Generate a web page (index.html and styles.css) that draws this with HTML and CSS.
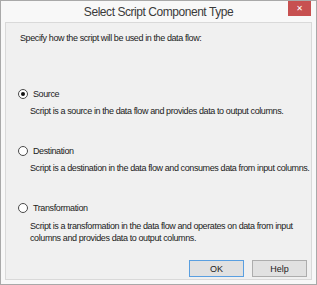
FILE: index.html
```html
<!DOCTYPE html>
<html lang="en">
<head>
  <meta charset="UTF-8" />
  <title>Select Script Component Type</title>
  <link rel="stylesheet" href="styles.css">
</head>
<body>
  <div class="window">
    <div class="titlebar">
      <span></span>
      <span class="title">Select Script Component Type</span>
      <span class="close-btn">&#x2715;</span>
    </div>

    <div class="client">
      <p class="intro">Specify how the script will be used in the data flow:</p>

      <div class="options">
        <div class="option">
          <div class="option-head">
            <span class="radio checked"></span>
            <span>Source</span>
          </div>
          <p class="option-desc">Script is a source in the data flow and provides data to output columns.</p>
        </div>

        <div class="option">
          <div class="option-head">
            <span class="radio"></span>
            <span>Destination</span>
          </div>
          <p class="option-desc">Script is a destination in the data flow and consumes data from input columns.</p>
        </div>

        <div class="option">
          <div class="option-head">
            <span class="radio"></span>
            <span>Transformation</span>
          </div>
          <p class="option-desc">Script is a transformation in the data flow and operates on data from input<br>columns and provides data to output columns.</p>
        </div>
      </div>

      <div class="buttons">
        <button class="btn default">OK</button>
        <button class="btn">Help</button>
      </div>
    </div>
  </div>
</body>
</html>
```

FILE: styles.css
```css
* {
  box-sizing: border-box;
  margin: 0;
  padding: 0;
}

body {
  background-color: #ffffff;
  font-family: "Liberation Sans", Arial, sans-serif;
}

.window {
  width: 317px;
  height: 285px;
  border: 1px solid #a9a9a9;
  background-color: #f8f8f8;
  padding: 0 4px 4px 4px;
  display: flex;
  flex-direction: column;
}

.titlebar {
  height: 21px;
  display: grid;
  grid-template-columns: 1fr auto 1fr;
  align-items: start;
}

.title {
  font-size: 12px;
  letter-spacing: -0.45px;
  line-height: 22px;
  color: #3a3a3a;
  white-space: nowrap;
}

.close-btn {
  justify-self: end;
  width: 23px;
  height: 15px;
  margin-right: 1px;
  background-color: #c75050;
  color: #fff;
  font-size: 8px;
  font-weight: bold;
  line-height: 15px;
  text-align: center;
  font-family: "DejaVu Sans", sans-serif;
}

.client {
  flex: 1;
  background-color: #f0f0f0;
  border: 1px solid #d9d9d9;
  padding: 9px 4px 2px 12px;
  display: flex;
  flex-direction: column;
  font-size: 9px;
  letter-spacing: -0.4px;
  line-height: 12px;
  color: #1b1b1b;
}

.intro {
  padding-left: 2px;
  white-space: nowrap;
}

.options {
  margin-top: 44px;
  display: flex;
  flex-direction: column;
  gap: 28px;
}

.option-head {
  display: flex;
  align-items: center;
  gap: 5px;
}

.radio {
  width: 10px;
  height: 10px;
  border-radius: 50%;
  border: 1px solid #4a4a4a;
  background-color: #fff;
  display: grid;
  place-items: center;
}

.radio.checked::after {
  content: "";
  width: 4px;
  height: 4px;
  border-radius: 50%;
  background-color: #111;
}

.option-desc {
  margin-top: 5px;
  padding-left: 12px;
  white-space: nowrap;
}

.option:last-child .option-desc {
  margin-top: 6px;
}

.buttons {
  margin-top: auto;
  display: flex;
  justify-content: flex-end;
  gap: 8px;
}

.btn {
  width: 55px;
  height: 17px;
  background-color: #e1e1e1;
  border: 1px solid #adadad;
  font-family: inherit;
  font-size: 9px;
  color: #1b1b1b;
}

.btn.default {
  border-color: #5a9fe0;
}
```
